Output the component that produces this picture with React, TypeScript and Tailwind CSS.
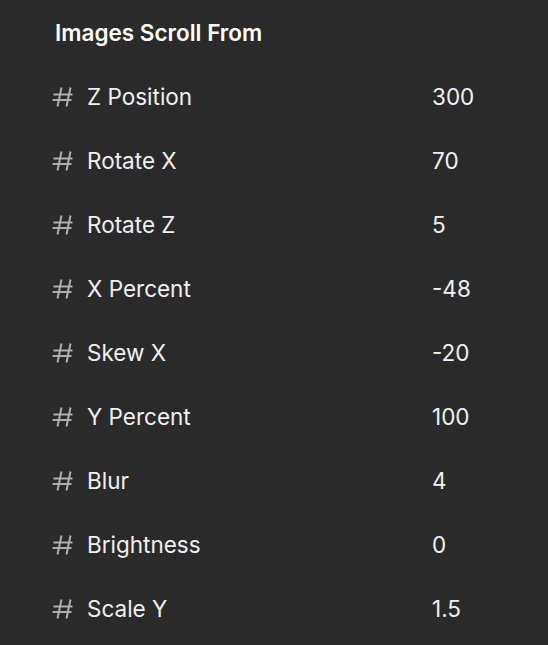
import React from 'react';

const rows: [string, string][] = [
  ['Z Position', '300'],
  ['Rotate X', '70'],
  ['Rotate Z', '5'],
  ['X Percent', '-48'],
  ['Skew X', '-20'],
  ['Y Percent', '100'],
  ['Blur', '4'],
  ['Brightness', '0'],
  ['Scale Y', '1.5'],
];

function Hash() {
  return (
    <svg width="21" height="20" viewBox="0 0 21 20" fill="none" stroke="#b3b3b3" strokeWidth="1.9" strokeLinecap="butt">
      <path d="M9.5 0.5 L5.5 19.5" />
      <path d="M18.5 0.5 L14.5 19.5" />
      <path d="M1.5 7.5 H20.5" />
      <path d="M0.5 13 H19.5" />
    </svg>
  );
}

export default function App() {
  return (
    <div
      className="w-[548px] h-[645px] bg-[#2a2a2a] text-white overflow-hidden"
      style={{ fontFamily: 'Inter, "Noto Sans", sans-serif' }}
    >
      <div className="pl-[55px] pt-[18px]">
        <h2 className="text-[22.5px] leading-[30px] font-semibold text-white">Images Scroll From</h2>
      </div>
      <div className="mt-[17px] flex flex-col">
        {rows.map(([label, value]) => (
          <div key={label} className="flex items-center h-[64px]">
            <span className="w-[35px] ml-[52px] flex items-center">
              <Hash />
            </span>
            <span className="w-[345px] text-[22.5px] text-[#f0f0f0]">{label}</span>
            <span className="text-[22.5px] text-[#f0f0f0]">{value}</span>
          </div>
        ))}
      </div>
    </div>
  );
}
